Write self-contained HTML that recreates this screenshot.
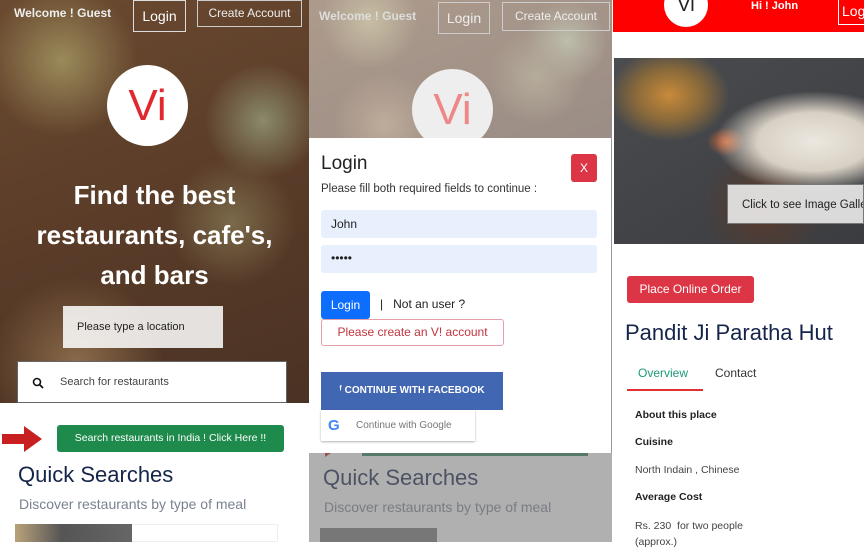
<!DOCTYPE html>
<html><head><meta charset="utf-8"><style>
*{margin:0;padding:0;box-sizing:border-box}
body{width:864px;height:542px;overflow:hidden;background:#fff;font-family:"Liberation Sans",sans-serif;position:relative}
.a{position:absolute}
.hero{background:radial-gradient(circle at 20% 15%,#9a8a5a 0,transparent 18%),radial-gradient(circle at 75% 55%,#7a6a4a 0,transparent 20%),radial-gradient(circle at 85% 30%,#8a8a6a 0,transparent 15%),radial-gradient(circle at 25% 90%,#8a6a4a 0,transparent 20%),linear-gradient(160deg,#6b4a30,#5a3c28 50%,#4a3224)}
</style></head><body>
<!-- panel 1 -->
<div class="a hero" style="left:0;top:0;width:309px;height:403px"></div>
<div class="a" style="left:14px;top:6px;color:#eee;font-weight:bold;font-size:12px">Welcome ! Guest</div>
<div class="a" style="left:133px;top:0;width:53px;height:32px;border:1px solid #ddd;color:#fff;font-size:14px;text-align:center;line-height:30px">Login</div>
<div class="a" style="left:197px;top:0;width:105px;height:27px;border:1px solid #ccc;color:#eee;font-size:12px;text-align:center;line-height:25px">Create Account</div>
<div class="a" style="left:107px;top:65px;width:81px;height:81px;border-radius:50%;background:#fff;color:#e0282e;font-size:44px;text-align:center;line-height:81px">Vi</div>
<div class="a" style="left:0;top:175px;width:309px;text-align:center;color:#fff;font-weight:bold;font-size:26px;line-height:40px">Find the best<br>restaurants, cafe's,<br>and bars</div>
<div class="a" style="left:63px;top:306px;width:160px;height:42px;background:rgba(255,255,255,.85);font-size:11px;line-height:42px;padding-left:14px;color:#222">Please type a location</div>
<div class="a" style="left:17px;top:361px;width:270px;height:42px;background:#fff;border:1px solid #666;font-size:11px;color:#444;line-height:40px;padding-left:42px">Search for restaurants</div>
<svg class="a" style="left:32px;top:377px" width="12" height="12"><circle cx="5" cy="5" r="3.5" stroke="#111" stroke-width="1.6" fill="none"/><line x1="7.5" y1="7.5" x2="11" y2="11" stroke="#111" stroke-width="1.8"/></svg>
<svg class="a" style="left:2px;top:425px" width="42" height="28"><polygon points="0,9 22,9 22,1 40,14 22,27 22,19 0,19" fill="#c82020"/></svg>
<div class="a" style="left:57px;top:425px;width:227px;height:27px;background:#1e8a4c;border-radius:3px;color:#fff;font-size:10.5px;text-align:center;line-height:27px">Search restaurants in India ! Click Here !!</div>
<div class="a" style="left:18px;top:462px;font-size:22px;color:#15254a">Quick Searches</div>
<div class="a" style="left:19px;top:496px;font-size:14px;color:#7a8290">Discover restaurants by type of meal</div>
<div class="a" style="left:15px;top:524px;width:263px;height:18px;border:1px solid #eee"></div>
<div class="a" style="left:15px;top:524px;width:117px;height:18px;background:linear-gradient(90deg,#b9a27a,#555 40%,#666)"></div>
<!-- panel 2 -->
<div class="a" style="left:309px;top:0;width:304px;height:542px;background:#fff"></div>
<div class="a hero" style="left:309px;top:0;width:303px;height:138px;opacity:.55"></div>
<div class="a" style="left:319px;top:9px;color:#ddd;font-weight:bold;font-size:12px">Welcome ! Guest</div>
<div class="a" style="left:438px;top:2px;width:52px;height:32px;border:1px solid #ccc;color:#eee;font-size:14px;text-align:center;line-height:30px">Login</div>
<div class="a" style="left:502px;top:2px;width:108px;height:29px;border:1px solid #ccc;color:#eee;font-size:12px;text-align:center;line-height:27px">Create Account</div>
<div class="a" style="left:412px;top:69px;width:81px;height:81px;border-radius:50%;background:#eee;color:#e88;font-size:44px;text-align:center;line-height:81px">Vi</div>
<div class="a" style="left:309px;top:453px;width:303px;height:89px;background:#f4f4f4"></div>
<div class="a" style="left:362px;top:450px;width:226px;height:6px;background:#2e7d52"></div>
<svg class="a" style="left:325px;top:449px" width="12" height="10"><polygon points="0,0 12,0 0,8" fill="#c82020"/></svg>
<div class="a" style="left:323px;top:465px;font-size:22px;color:#15254a">Quick Searches</div>
<div class="a" style="left:324px;top:499px;font-size:14px;color:#7a8290">Discover restaurants by type of meal</div>
<div class="a" style="left:320px;top:528px;width:117px;height:14px;background:#777"></div>
<div class="a" style="left:309px;top:453px;width:303px;height:89px;background:rgba(120,120,120,.55)"></div>
<div class="a" style="left:309px;top:138px;width:303px;height:315px;background:#fff;border-right:1px solid #999"></div>
<div class="a" style="left:321px;top:153px;font-size:19px;color:#222">Login</div>
<div class="a" style="left:571px;top:154px;width:26px;height:28px;background:#dc3545;border-radius:3px;color:#fff;font-size:12px;text-align:center;line-height:28px">X</div>
<div class="a" style="left:321px;top:183px;font-size:11.5px;color:#333">Please fill both required fields to continue :</div>
<div class="a" style="left:321px;top:210px;width:276px;height:28px;background:#e8f0fe;border-radius:3px;font-size:12px;line-height:28px;padding-left:10px;color:#222">John</div>
<div class="a" style="left:321px;top:245px;width:276px;height:28px;background:#e8f0fe;border-radius:3px;font-size:12px;line-height:26px;padding-left:10px;color:#222">•••••</div>
<div class="a" style="left:321px;top:291px;width:49px;height:28px;background:#0d6efd;border-radius:3px;color:#fff;font-size:12px;text-align:center;line-height:28px">Login</div>
<div class="a" style="left:380px;top:297px;font-size:12px;color:#222">|&nbsp;&nbsp;&nbsp;Not an user ?</div>
<div class="a" style="left:321px;top:319px;width:183px;height:27px;border:1px solid #e4a0a8;border-radius:3px;color:#c0353f;font-size:12px;text-align:center;line-height:25px">Please create an V! account</div>
<div class="a" style="left:321px;top:372px;width:182px;height:38px;background:#4267b2;color:#fff;font-weight:bold;font-size:10px;text-align:center;line-height:38px">ᶠ CONTINUE WITH FACEBOOK</div>
<div class="a" style="left:321px;top:410px;width:154px;height:31px;background:#fff;box-shadow:0 1px 2px rgba(0,0,0,.3);font-size:10px;color:#777;line-height:31px;padding-left:35px">Continue with Google</div>
<div class="a" style="left:328px;top:417px;font-weight:bold;font-size:15px;color:#4285f4">G</div>
<!-- panel 3 -->
<div class="a" style="left:613px;top:0;width:251px;height:32px;background:#f00"></div>
<div class="a" style="left:664px;top:-17px;width:44px;height:44px;border-radius:50%;background:#fff;color:#222;font-size:20px;text-align:center;line-height:44px">Vi</div>
<div class="a" style="left:751px;top:0;color:#fff;font-weight:bold;font-size:11px">Hi ! John</div>
<div class="a" style="left:838px;top:-2px;width:30px;height:27px;border:1px solid #fff;color:#fff;font-size:14px;line-height:25px;padding-left:3px">Log</div>
<div class="a" style="left:614px;top:58px;width:250px;height:186px;background:radial-gradient(ellipse at 22% 20%,#c88a3a 0,#8a6a3a 12%,transparent 22%),radial-gradient(ellipse at 80% 45%,#ece8e0 0,#d8d0c4 20%,transparent 35%),radial-gradient(ellipse at 45% 45%,#d86a3a 0,transparent 10%),radial-gradient(ellipse at 60% 80%,#5a3a2a 0,transparent 30%),linear-gradient(150deg,#4a4c50,#3a3c40)"></div>
<div class="a" style="left:727px;top:184px;width:137px;height:40px;background:rgba(235,235,235,.9);border:1px solid #777;font-size:11.5px;color:#222;line-height:40px;padding-left:14px;white-space:nowrap;overflow:hidden">Click to see Image Gallery</div>
<div class="a" style="left:627px;top:276px;width:127px;height:27px;background:#dc3545;border-radius:3px;color:#fff;font-size:12px;text-align:center;line-height:27px">Place Online Order</div>
<div class="a" style="left:625px;top:320px;font-size:22px;color:#15254a;white-space:nowrap">Pandit Ji Paratha Hut</div>
<div class="a" style="left:638px;top:366px;font-size:12px;color:#1a9a7a">Overview</div>
<div class="a" style="left:715px;top:366px;font-size:12px;color:#333">Contact</div>
<div class="a" style="left:627px;top:389px;width:76px;height:2px;background:#e03030"></div>
<div class="a" style="left:635px;top:409px;font-size:10.5px;font-weight:bold;color:#222">About this place</div>
<div class="a" style="left:635px;top:436px;font-size:10.5px;font-weight:bold;color:#222">Cuisine</div>
<div class="a" style="left:635px;top:464px;font-size:10.5px;color:#444">North Indain , Chinese</div>
<div class="a" style="left:635px;top:491px;font-size:10.5px;font-weight:bold;color:#222">Average Cost</div>
<div class="a" style="left:635px;top:518px;font-size:10.5px;color:#444;line-height:16px">Rs. 230&nbsp; for two people<br>(approx.)</div>
</body></html>
